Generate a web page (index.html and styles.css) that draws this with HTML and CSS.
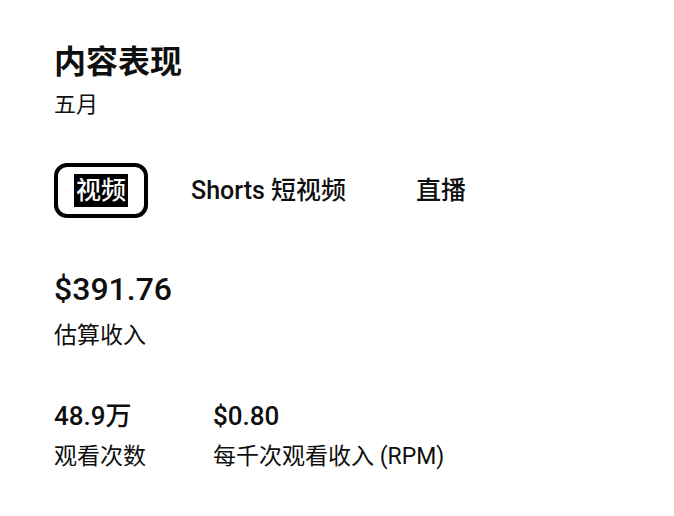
FILE: index.html
```html
<!DOCTYPE html>
<html lang="zh-CN">
<head>
<meta charset="utf-8">
<link rel="stylesheet" href="styles.css">
</head>
<body>
<main class="card">
  <h1 class="title">内容表现</h1>
  <div class="subtitle">五月</div>
  <nav class="tabs">
    <div class="tab tab-active"><span class="tab-label">视频</span></div>
    <div class="tab">Shorts 短视频</div>
    <div class="tab tab-live">直播</div>
  </nav>
  <section class="metric metric-main">
    <div class="value value-lg">$391.76</div>
    <div class="label label-main">估算收入</div>
  </section>
  <section class="metric-row">
    <div class="metric metric-col1">
      <div class="value">48.9万</div>
      <div class="label">观看次数</div>
    </div>
    <div class="metric">
      <div class="value">$0.80</div>
      <div class="label">每千次观看收入 (RPM)</div>
    </div>
  </section>
</main>
</body>
</html>
```

FILE: styles.css
```css
html, body {
  margin: 0;
  padding: 0;
  background: #ffffff;
}
body {
  font-family: Roboto, "Noto Sans CJK SC", sans-serif;
  color: #0f0f0f;
}
.card {
  padding: 42px 0 0 54px;
}
.title {
  margin: 0;
  font-size: 32px;
  font-weight: 700;
  line-height: 40px;
}
.subtitle {
  margin-top: 10px;
  font-size: 22px;
  line-height: 26px;
}
.tabs {
  display: flex;
  gap: 23px;
  margin-top: 45px;
}
.tab {
  border: 4px solid transparent;
  border-radius: 13px;
  padding: 0 16px;
  height: 47px;
  line-height: 47px;
  font-size: 25px;
  font-weight: 500;
}
.tab-active {
  border-color: #000;
}
.tab-label {
  background: #000;
  color: #fff;
  padding: 2px 2px;
}
.tab-live {
  margin-left: 7px;
}
.metric-main {
  margin-top: 52px;
}
.value {
  font-size: 26px;
  font-weight: 500;
  line-height: 30px;
}
.value-lg {
  font-size: 32px;
  line-height: 38px;
}
.label {
  margin-top: 11px;
  font-size: 23px;
  line-height: 30px;
}
.label-main {
  margin-top: 13px;
}
.metric-row {
  display: flex;
  margin-top: 50px;
}
.metric-col1 {
  width: 159px;
}
```
